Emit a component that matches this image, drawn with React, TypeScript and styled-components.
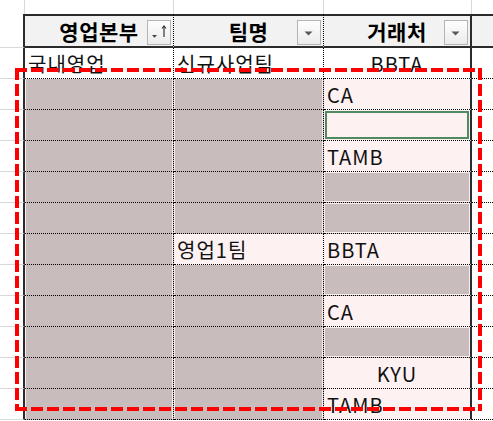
import React from 'react';
import styled, { createGlobalStyle, css } from 'styled-components';

const Global = createGlobalStyle`
  html, body { margin: 0; padding: 0; background: #fff; overflow: hidden; }
  body { width: 493px; height: 421px; font-family: "Noto Sans CJK KR", "Noto Sans", sans-serif; }
`;

const GRAY = '#c8bcbc';
const PINK = '#fdf1f1';
const EDGE = '#f7eded';
const DARK = '#2b2b2b';
const COLS = '25px 149px 150px 148px 1fr';

const Sheet = styled.div`
  position: relative;
  width: 493px;
  height: 421px;
  overflow: hidden;
`;

const Row = styled.div<{ $h: number }>`
  display: grid;
  grid-template-columns: ${COLS};
  height: ${(p) => p.$h}px;
`;

const TopCell = styled.div<{ $last?: boolean }>`
  box-sizing: border-box;
  border-right: ${(p) => (p.$last ? 'none' : '1px solid #d9d9d9')};
`;

const HeadCorner = styled.div`
  box-sizing: border-box;
  border-right: 2px solid ${DARK};
  border-bottom: 1px solid #d9d9d9;
`;

const HeadCell = styled.div<{ $edge?: 'dotted' | 'thick' | 'none' }>`
  position: relative;
  box-sizing: border-box;
  background: #f2f2f2;
  border-top: 2px solid ${DARK};
  border-bottom: 2px solid ${DARK};
  ${(p) =>
    p.$edge === 'dotted'
      ? css`border-right: 1px dotted #000;`
      : p.$edge === 'thick'
      ? css`border-right: 2px solid ${DARK};`
      : ''}
  display: flex;
  align-items: center;
  justify-content: center;
  font-weight: 700;
  font-size: 21px;
  letter-spacing: 0.5px;
  color: #000;
`;

const FilterButton = styled.div`
  position: absolute;
  right: 2px;
  top: 4px;
  width: 24px;
  height: 25px;
  box-sizing: border-box;
  border: 1px solid #b4b4b4;
  background: linear-gradient(#fefefe, #ebebeb);
  display: flex;
`;

const SideCell = styled.div`
  box-sizing: border-box;
  border-right: 2px solid ${DARK};
  border-bottom: 1px solid #d9d9d9;
`;

type Fill = 'none' | 'gray' | 'pink';

const Cell = styled.div<{
  $fill: Fill;
  $edge: 'dotted' | 'thick';
  $center?: boolean;
  $box?: boolean;
  $selected?: boolean;
}>`
  box-sizing: border-box;
  border-bottom: 1px dotted #000;
  border-right: ${(p) => (p.$edge === 'dotted' ? '1px dotted #000' : `2px solid ${DARK}`)};
  background: ${(p) => (p.$fill === 'gray' ? GRAY : p.$fill === 'pink' ? PINK : '#fff')};
  ${(p) =>
    p.$fill === 'gray' &&
    (p.$box
      ? css`box-shadow: inset 0 0 0 1px ${EDGE};`
      : css`box-shadow: inset 1px 0 0 ${EDGE}, inset -1px 0 0 ${EDGE};`)}
  ${(p) =>
    p.$selected &&
    css`box-shadow: inset 0 0 0 1px ${PINK}, inset 0 0 0 3px #4f8a60;`}
  display: flex;
  align-items: center;
  justify-content: ${(p) => (p.$center ? 'center' : 'flex-start')};
  padding-left: ${(p) => (p.$center ? 0 : 3)}px;
  font-size: 20px;
  letter-spacing: 1px;
  color: #111;
  white-space: nowrap;
  overflow: hidden;
`;

const Blank = styled.div`
  box-sizing: border-box;
  border-bottom: 1px dotted #000;
`;

const Overlay = styled.svg`
  position: absolute;
  left: 0;
  top: 0;
  pointer-events: none;
`;

const SortedIcon = () => (
  <svg width="22" height="23" viewBox="0 0 22 23">
    <path d="M4 14 L9 14 L6.5 16.8 Z" fill="#444" />
    <path d="M16 5 V16" stroke="#333" strokeWidth="1.2" fill="none" />
    <path d="M14 7.5 L16 5 L18 7.5" stroke="#333" strokeWidth="1.1" fill="none" />
  </svg>
);

const DropIcon = () => (
  <svg width="22" height="23" viewBox="0 0 22 23">
    <path d="M6.5 10.5 L14.5 10.5 L10.5 14.5 Z" fill="#595959" />
  </svg>
);

type CellData = { t?: string; fill: Fill; center?: boolean; selected?: boolean };
type RowData = [CellData, CellData, CellData];

const g: CellData = { fill: 'gray' };
const rows: RowData[] = [
  [{ t: '국내영업', fill: 'none' }, { t: '신규사업팀', fill: 'none' }, { t: 'BBTA', fill: 'none', center: true }],
  [g, g, { t: 'CA', fill: 'pink' }],
  [g, g, { fill: 'pink', selected: true }],
  [g, g, { t: 'TAMB', fill: 'pink' }],
  [g, g, g],
  [g, g, g],
  [g, { t: '영업1팀', fill: 'pink' }, { t: 'BBTA', fill: 'pink' }],
  [g, g, g],
  [g, g, { t: 'CA', fill: 'pink' }],
  [g, g, g],
  [g, g, { t: 'KYU', fill: 'pink', center: true }],
  [g, g, { t: 'TAMB', fill: 'pink' }],
];

export default function App() {
  return (
    <>
      <Global />
      <Sheet>
        <Row $h={14}>
          <TopCell />
          <TopCell />
          <TopCell />
          <TopCell />
          <TopCell $last />
        </Row>
        <Row $h={34}>
          <HeadCorner />
          <HeadCell $edge="dotted">
            영업본부
            <FilterButton>
              <SortedIcon />
            </FilterButton>
          </HeadCell>
          <HeadCell $edge="dotted">
            팀명
            <FilterButton>
              <DropIcon />
            </FilterButton>
          </HeadCell>
          <HeadCell $edge="thick">
            거래처
            <FilterButton>
              <DropIcon />
            </FilterButton>
          </HeadCell>
          <HeadCell $edge="none" />
        </Row>
        {rows.map((r, i) => (
          <Row $h={31} key={i}>
            <SideCell />
            {r.map((c, j) => (
              <Cell
                key={j}
                $fill={c.fill}
                $edge={j === 2 ? 'thick' : 'dotted'}
                $center={c.center}
                $box={j === 2}
                $selected={c.selected}
              >
                {c.t}
              </Cell>
            ))}
            <Blank />
          </Row>
        ))}
        <Overlay width="493" height="421">
          <g stroke="#ff0000" strokeWidth="4" strokeDasharray="12 4" fill="none">
            <line x1="15" y1="70" x2="482" y2="70" />
            <line x1="480" y1="68" x2="480" y2="411" />
            <line x1="15" y1="409" x2="482" y2="409" />
            <line x1="17" y1="68" x2="17" y2="411" />
          </g>
        </Overlay>
      </Sheet>
    </>
  );
}
